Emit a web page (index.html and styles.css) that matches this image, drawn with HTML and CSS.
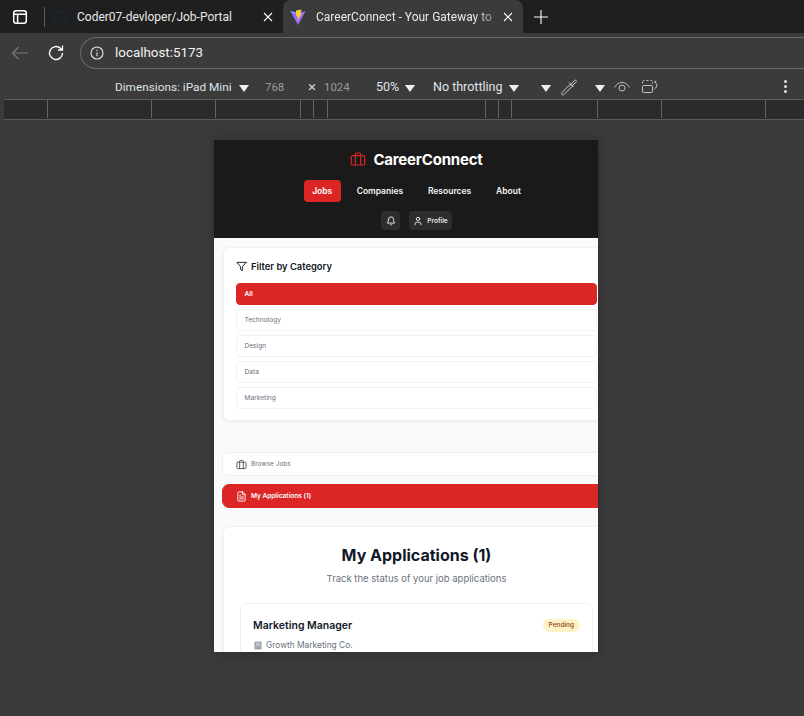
FILE: index.html
```html
<!DOCTYPE html>
<html>

<head>
    <meta name="viewport" content="width=device-width, initial-scale=1.0">
    <title>CareerConnect - Your Gateway to Success</title>
    <link rel="stylesheet" href="styles.css">
</head>

<body>
    <div class="browser">
        <!-- Onglets -->
        <div class="tabstrip">
            <svg class="panel-icon" width="16" height="16" viewBox="0 0 16 16" fill="none" stroke="#fff" stroke-width="1.5">
                <rect x="1.7" y="1.7" width="12.6" height="12.6" rx="2.5"/>
                <path d="M1.7 5.2h12.600M5.600 5.200v9"/>
            </svg>
            <span class="tab-divider"></span>
            <div class="tab">
                <svg class="tab-gh" width="16" height="16" viewBox="0 0 16 16" fill="#1b2430">
                    <path d="M8 0C3.58 0 0 3.58 0 8c0 3.54 2.29 6.53 5.47 7.59.4.07.55-.17.55-.38v-1.34c-2.23.48-2.7-1.07-2.7-1.07-.36-.92-.89-1.17-.89-1.17-.73-.5.05-.49.05-.49.8.06 1.23.83 1.23.83.71 1.22 1.87.87 2.33.66.07-.52.28-.87.5-1.07-1.78-.2-3.64-.89-3.64-3.95 0-.87.31-1.59.82-2.15-.08-.2-.36-1.02.08-2.12 0 0 .67-.21 2.2.82a7.6 7.6 0 0 1 4 0c1.53-1.04 2.2-.82 2.2-.82.44 1.1.16 1.92.08 2.12.51.56.82 1.27.82 2.15 0 3.07-1.87 3.75-3.65 3.95.29.25.54.73.54 1.48v2.2c0 .21.15.46.55.38A8 8 0 0 0 16 8c0-4.42-3.58-8-8-8z"/>
                </svg>
                <span class="tab-title tab-title-first">Coder07-devloper/Job-Portal</span>
                <svg class="tab-close" width="10" height="10" viewBox="0 0 10 10" stroke="#fff" stroke-width="1.1"><path d="M1 1l8 8M9 1L1 9"/></svg>
            </div>
            <div class="tab tab-active">
                <svg width="16" height="16" viewBox="0 0 16 16">
                    <path d="M0.3 2.2L8 16l7.7-13.8L8 3.6z" fill="#8f6cf6"/>
                    <path d="M6 1.6L11.6 0.6 10.4 4.6 12 4.3 7.2 12.6 7.9 7 6.2 7.4z" fill="#ffcb2e"/>
                    <path d="M0.3 2.2L5 3V5z" fill="#5ec8f8"/>
                </svg>
                <span class="tab-title tab-fade">CareerConnect - Your Gateway to</span>
                <svg class="tab-close" width="10" height="10" viewBox="0 0 10 10" stroke="#fff" stroke-width="1.1"><path d="M1 1l8 8M9 1L1 9"/></svg>
            </div>
            <svg class="new-tab" width="14" height="14" viewBox="0 0 14 14" stroke="#fff" stroke-width="1.1"><path d="M7 0v14M0 7h14"/></svg>
        </div>

        <!-- Barre d'adresse -->
        <div class="toolbar">
            <svg class="nav-back" width="18" height="14" viewBox="0 0 18 14" fill="none" stroke="#77787a" stroke-width="1.2"><path d="M17 7H1.500M7.500 1L1.500 7l6 6"/></svg>
            <svg class="nav-reload" width="18" height="18" viewBox="0 0 18 18" fill="none" stroke="#fff" stroke-width="1.3"><path d="M15.500 9a6.500 6.500 0 1 1-2-4.700L15.500 6M15.500 1.600V6H11"/></svg>
            <div class="address">
                <svg width="14" height="14" viewBox="0 0 14 14" fill="none" stroke="#e3e3e3" stroke-width="1.1">
                    <circle cx="7" cy="7" r="6"/>
                    <path d="M7 6.200v4M7 3.700v1.200"/>
                </svg>
                <span>localhost:5173</span>
            </div>
        </div>

        <!-- Outils de l'appareil -->
        <div class="devtools">
            <div class="device-bar">
                <span class="db-dimensions">Dimensions: iPad Mini</span>
                <span class="caret caret-dim"></span>
                <span class="db-size db-width">768</span>
                <span class="db-times">×</span>
                <span class="db-size db-height">1024</span>
                <span class="db-zoom">50%</span>
                <span class="caret caret-zoom"></span>
                <span class="db-throttle">No throttling</span>
                <span class="caret caret-throttle"></span>
                <span class="caret caret-touch"></span>
                <svg class="db-dropper" width="18" height="18" viewBox="0 0 18 18" fill="none" stroke="#d0d0d0" stroke-width="1">
                    <path d="M2 16.500c-.6-.6-.5-1.500 0-2l8-8 2 2-8 8c-.500.500-1.400.600-2 0z"/>
                    <path d="M9 4.500l4.500 4.500M11 6.500l2.500-3c1-1.200 1.800-1.800 2.600-1 .8.800.2 1.600-1 2.600l-3 2.500"/>
                </svg>
                <span class="caret caret-eye"></span>
                <svg class="db-eye" width="16" height="12" viewBox="0 0 16 12" fill="none" stroke="#b9b9b9" stroke-width="1">
                    <path d="M.6 6.500C2.400 3 5 1.400 8 1.400s5.600 1.600 7.400 5.100"/>
                    <circle cx="8" cy="7" r="3"/>
                </svg>
                <svg class="db-rotate" width="16" height="13" viewBox="0 0 16 13" fill="none" stroke="#c4c4c4" stroke-width="1">
                    <rect x=".5" y="5.500" width="10" height="7" rx="1"/>
                    <path d="M.5 3.500V1.500a1 1 0 0 1 1-1h1M4.500.5h2M8.500.5h1a1 1 0 0 1 1 1v2" stroke-dasharray="2 1"/>
                    <path d="M12.500 2c2.500.800 3 3.500 1.200 6l-1.200 1M12.500 2l1.500-1.500M12.500 2l1.500 1"/>
                </svg>
                <span class="db-more"><i></i><i></i><i></i></span>
            </div>
            <div class="ruler">
                <i style="left:47px"></i>
                <i style="left:151px"></i>
                <i style="left:215px"></i>
                <i style="left:300px"></i>
                <i style="left:313px"></i>
                <i style="left:327px"></i>
                <i style="left:485px"></i>
                <i style="left:498px"></i>
                <i style="left:511px"></i>
                <i style="left:597px"></i>
                <i style="left:661px"></i>
                <i style="left:765px"></i>
            </div>

            <div class="canvas">
                <div class="device">
                    <div class="device-page">
                    <header class="site-header">
                        <div class="logo">
                            <svg width="16" height="16" viewBox="0 0 24 24" fill="none" stroke="#dc2626" stroke-width="1.800" stroke-linecap="round" stroke-linejoin="round">
                                <path d="M16 21V5a2 2 0 0 0-2-2h-4a2 2 0 0 0-2 2v16"/>
                                <rect x="2" y="7" width="20" height="14" rx="2"/>
                            </svg>
                            <span>CareerConnect</span>
                        </div>
                        <nav class="site-nav">
                            <a class="nav-link nav-active">Jobs</a>
                            <a class="nav-link">Companies</a>
                            <a class="nav-link">Resources</a>
                            <a class="nav-link">About</a>
                        </nav>
                        <div class="user-actions">
                            <button class="icon-btn" type="button">
                                <svg width="10" height="10" viewBox="0 0 24 24" fill="none" stroke="#fff" stroke-width="2" stroke-linecap="round" stroke-linejoin="round">
                                    <path d="M6 8a6 6 0 0 1 12 0c0 7 3 9 3 9H3s3-2 3-9"/>
                                    <path d="M10.300 21a1.940 1.940 0 0 0 3.400 0"/>
                                </svg>
                            </button>
                            <button class="profile-btn" type="button">
                                <svg width="10" height="10" viewBox="0 0 24 24" fill="none" stroke="#fff" stroke-width="2" stroke-linecap="round" stroke-linejoin="round">
                                    <path d="M19 21v-2a4 4 0 0 0-4-4H9a4 4 0 0 0-4 4v2"/>
                                    <circle cx="12" cy="7" r="4"/>
                                </svg>
                                Profile
                            </button>
                        </div>
                    </header>

                    <main class="site-main">
                        <section class="card filter-card">
                            <h3 class="filter-title">
                                <svg width="11" height="11" viewBox="0 0 24 24" fill="none" stroke="#111827" stroke-width="2" stroke-linecap="round" stroke-linejoin="round">
                                    <path d="M22 3H2l8 9.460V19l4 2v-8.540L22 3z"/>
                                </svg>
                                Filter by Category
                            </h3>
                            <ul class="filter-list">
                                <li class="filter-item filter-active">All</li>
                                <li class="filter-item">Technology</li>
                                <li class="filter-item">Design</li>
                                <li class="filter-item">Data</li>
                                <li class="filter-item">Marketing</li>
                            </ul>
                        </section>

                        <div class="view-tab">
                            <svg width="11" height="11" viewBox="0 0 24 24" fill="none" stroke="#4b5563" stroke-width="2" stroke-linecap="round" stroke-linejoin="round">
                                <path d="M16 21V5a2 2 0 0 0-2-2h-4a2 2 0 0 0-2 2v16"/>
                                <rect x="2" y="7" width="20" height="14" rx="2"/>
                            </svg>
                            Browse Jobs
                        </div>
                        <div class="view-tab view-tab-active">
                            <svg width="11" height="11" viewBox="0 0 24 24" fill="none" stroke="#fff" stroke-width="2" stroke-linecap="round" stroke-linejoin="round">
                                <path d="M14.500 2H6a2 2 0 0 0-2 2v16a2 2 0 0 0 2 2h12a2 2 0 0 0 2-2V7.500L14.500 2z"/>
                                <path d="M14 2v6h6M16 13H8M16 17H8M10 9H8"/>
                            </svg>
                            My Applications (1)
                        </div>

                        <section class="card apps-card">
                            <h2 class="apps-title">My Applications (1)</h2>
                            <p class="apps-sub">Track the status of your job applications</p>
                            <article class="app-item">
                                <div class="app-head">
                                    <h4>Marketing Manager</h4>
                                    <span class="badge">Pending</span>
                                </div>
                                <div class="app-company">
                                    <svg width="8" height="9" viewBox="0 0 8 9"><path d="M.5.500h7v8h-7z" fill="#9ca3af"/><path d="M2 2h4M2 3.500h4M2 5h4" stroke="#e5e7eb" stroke-width=".6"/></svg>
                                    Growth Marketing Co.
                                </div>
                            </article>
                        </section>
                    </main>
                    </div>
                </div>
            </div>
        </div>
    </div>
</body>

</html>
```

FILE: styles.css
```css
/* Style général */
* {
    box-sizing: border-box;
}

html,
body {
    margin: 0;
    padding: 0;
    height: 100%;
    overflow: hidden;
}

body {
    background: #3b3b3b;
    color: #fff;
    font-family: Roboto, "Noto Sans", sans-serif;
}

.browser {
    display: flex;
    flex-direction: column;
    height: 716px;
}

/* Onglets */
.tabstrip {
    display: flex;
    align-items: center;
    height: 33px;
    flex-shrink: 0;
    background: #1f1f1f;
}

.panel-icon {
    margin-left: 12px;
}

.tab-divider {
    width: 1px;
    height: 20px;
    margin-left: 16px;
    background: #5a5a5a;
}

.tab {
    display: flex;
    align-items: center;
    width: 238px;
    height: 33px;
    padding-left: 7px;
}

.tab-title {
    margin-left: 10px;
    font-size: 12px;
    white-space: nowrap;
    color: #e8e8e8;
}

.tab-title-first {
    margin-left: 9px;
}

.tab-close {
    margin-left: auto;
    margin-right: 10px;
    flex-shrink: 0;
}

.tab-active {
    width: 240px;
    border-radius: 8px 8px 0 0;
    background: #3b3b3b;
}

.tab-fade {
    width: 180px;
    -webkit-mask-image: linear-gradient(to right, #000 88%, rgba(0, 0, 0, 0.35));
    mask-image: linear-gradient(to right, #000 88%, rgba(0, 0, 0, 0.35));
}

.new-tab {
    margin-left: 11px;
}

/* Barre d'adresse */
.toolbar {
    display: flex;
    align-items: center;
    height: 39px;
    flex-shrink: 0;
    background: #3b3b3b;
}

.nav-back {
    margin-left: 11px;
}

.nav-reload {
    margin-left: 18px;
}

.address {
    display: flex;
    align-items: center;
    gap: 11px;
    flex: 1;
    height: 32px;
    margin-left: 15px;
    padding-left: 9px;
    border: 1px solid #6a6a6a;
    border-right: 0;
    border-radius: 16px 0 0 16px;
    font-size: 13.400px;
    color: #f2f2f2;
}

/* Outils de l'appareil */
.devtools {
    display: flex;
    flex-direction: column;
    flex: 1;
    min-height: 0;
}

.device-bar {
    position: relative;
    height: 28px;
    flex-shrink: 0;
    margin-left: 4px;
    font-size: 12.500px;
    line-height: 30px;
    border-bottom: 1px solid #5c5c5c;
    border-top-left-radius: 6px;
    background: #3b3b3b;
    color: #dfe3e8;
}

.device-bar > * {
    position: absolute;
}

.caret {
    top: 13px;
    width: 0;
    height: 0;
    border-left: 5.500px solid transparent;
    border-right: 5.500px solid transparent;
    border-top: 7px solid #f0f0f0;
}

.db-dimensions { left: 111px; font-size: 11.800px; }
.caret-dim { left: 235px; }
.db-size { color: #9a9a9a; font-size: 11.400px; }
.db-width { left: 261px; }
.db-times { left: 304px; color: #c8c8c8; font-size: 15px; }
.db-height { left: 320px; }
.db-zoom { left: 372px; }
.caret-zoom { left: 401px; }
.db-throttle { left: 429px; }
.caret-throttle { left: 505px; }
.caret-touch { left: 537px; }
.db-dropper { left: 556px; top: 6px; }
.caret-eye { left: 591px; }
.db-eye { left: 610px; top: 9px; }
.db-rotate { left: 638px; top: 8px; }

.db-more {
    left: 780px;
    top: 8px;
    display: flex;
    flex-direction: column;
    gap: 2px;
}

.db-more i {
    width: 3px;
    height: 3px;
    border-radius: 50%;
    background: #e0e0e0;
}

.ruler {
    position: relative;
    height: 20px;
    flex-shrink: 0;
    margin-left: 4px;
    border-bottom: 1px solid #5c5c5c;
    background: #2a2b2d;
}

.ruler i {
    position: absolute;
    top: 0;
    bottom: 1px;
    width: 1px;
    margin-left: -4px;
    background: #646464;
}

.canvas {
    flex: 1;
    min-height: 0;
    padding-top: 20px;
    background: #3a3a3a;
}

/* Page simulée */
.device {
    width: 384px;
    height: 512px;
    margin-left: 214px;
    overflow: hidden;
    background: #f9fafb;
    color: #111827;
    font-family: Inter, "Liberation Sans", sans-serif;
    box-shadow: 0 0 8px rgba(0, 0, 0, 0.25);
}

.device-page {
    width: 405px;
}

.site-header {
    display: flex;
    flex-direction: column;
    align-items: center;
    height: 98px;
    padding-top: 10px;
    background: #1a1a1a;
    color: #fff;
}

.logo {
    display: flex;
    align-items: center;
    gap: 7px;
    height: 18px;
    font-size: 15px;
    font-weight: 700;
    letter-spacing: -0.2px;
}

.site-nav {
    display: flex;
    align-items: center;
    margin-top: 12px;
    padding-left: 4px;
}

.nav-link {
    height: 22px;
    padding: 0 12.400px;
    font-size: 8.500px;
    font-weight: 600;
    line-height: 23px;
    border-radius: 4px;
    color: #f3f4f6;
}

.nav-link.nav-active {
    margin-right: 3.500px;
    padding: 0 8.500px;
    background: #dc2626;
    color: #fff;
}

.user-actions {
    display: flex;
    gap: 9px;
    margin-top: 9px;
}

.icon-btn,
.profile-btn {
    display: flex;
    align-items: center;
    justify-content: center;
    height: 19px;
    padding: 0;
    border: 0;
    border-radius: 4px;
    background: #2d2d2d;
    color: #e5e7eb;
    font-family: inherit;
}

.icon-btn {
    width: 19px;
}

.profile-btn {
    gap: 4px;
    width: 43px;
    font-size: 6.500px;
    font-weight: 600;
}

.site-main {
    padding: 9px 9px 0;
}

.card {
    width: 387px;
    border: 1px solid #f0f1f3;
    border-radius: 6px;
    background: #fff;
    box-shadow: 0 1px 3px rgba(0, 0, 0, 0.08);
}

.filter-card {
    height: 174px;
    padding: 10px 12px 0;
}

.filter-title {
    display: flex;
    align-items: center;
    gap: 4px;
    margin: 0;
    height: 16px;
    font-size: 9.400px;
    font-weight: 600;
}

.filter-list {
    display: flex;
    flex-direction: column;
    gap: 4px;
    width: 361px;
    margin: 9px 0 0;
    padding: 0;
    list-style: none;
}

.filter-item {
    height: 22px;
    padding-left: 7.500px;
    border: 1px solid #f1f2f4;
    border-radius: 4px;
    background: #fff;
    font-size: 6.600px;
    line-height: 20px;
    color: #6b7280;
}

.filter-active {
    border-color: #dc2626;
    background: #dc2626;
    font-weight: 600;
    line-height: 21px;
    color: #fff;
}

/* Onglets de vue */
.view-tab {
    display: flex;
    align-items: center;
    gap: 4px;
    width: 400px;
    height: 24px;
    margin: 31px 0 0 -1px;
    padding-left: 13px;
    border: 1px solid #eceef1;
    border-radius: 7px;
    background: #fff;
    font-size: 6.500px;
    color: #6b7280;
}

.view-tab-active {
    margin-top: 8px;
    border-color: #dc2626;
    background: #dc2626;
    font-weight: 600;
    color: #fff;
}

/* Candidatures */
.apps-card {
    height: 200px;
    margin-top: 18px;
    padding-top: 18px;
    text-align: center;
}

.apps-title {
    margin: 0;
    font-size: 16px;
    line-height: 20px;
    font-weight: 700;
}

.apps-sub {
    margin: 7px 0 0;
    font-size: 9.500px;
    line-height: 14px;
    color: #6b7280;
}

.app-item {
    width: 353px;
    height: 90px;
    margin: 17px 0 0 16px;
    padding: 15px 12px;
    border: 1px solid #f0f1f3;
    border-radius: 6px;
    text-align: left;
}

.app-head {
    display: flex;
    align-items: center;
    justify-content: space-between;
}

.app-head h4 {
    margin: 0;
    font-size: 10.500px;
    font-weight: 600;
}

.badge {
    padding: 0 6px;
    border-radius: 7px;
    background: #fef3c7;
    font-size: 6.500px;
    line-height: 13px;
    font-weight: 500;
    color: #92400e;
}

.app-company {
    display: flex;
    align-items: center;
    gap: 4px;
    margin-top: 8px;
    padding-left: 1px;
    font-size: 8.400px;
    color: #6b7280;
}
```
